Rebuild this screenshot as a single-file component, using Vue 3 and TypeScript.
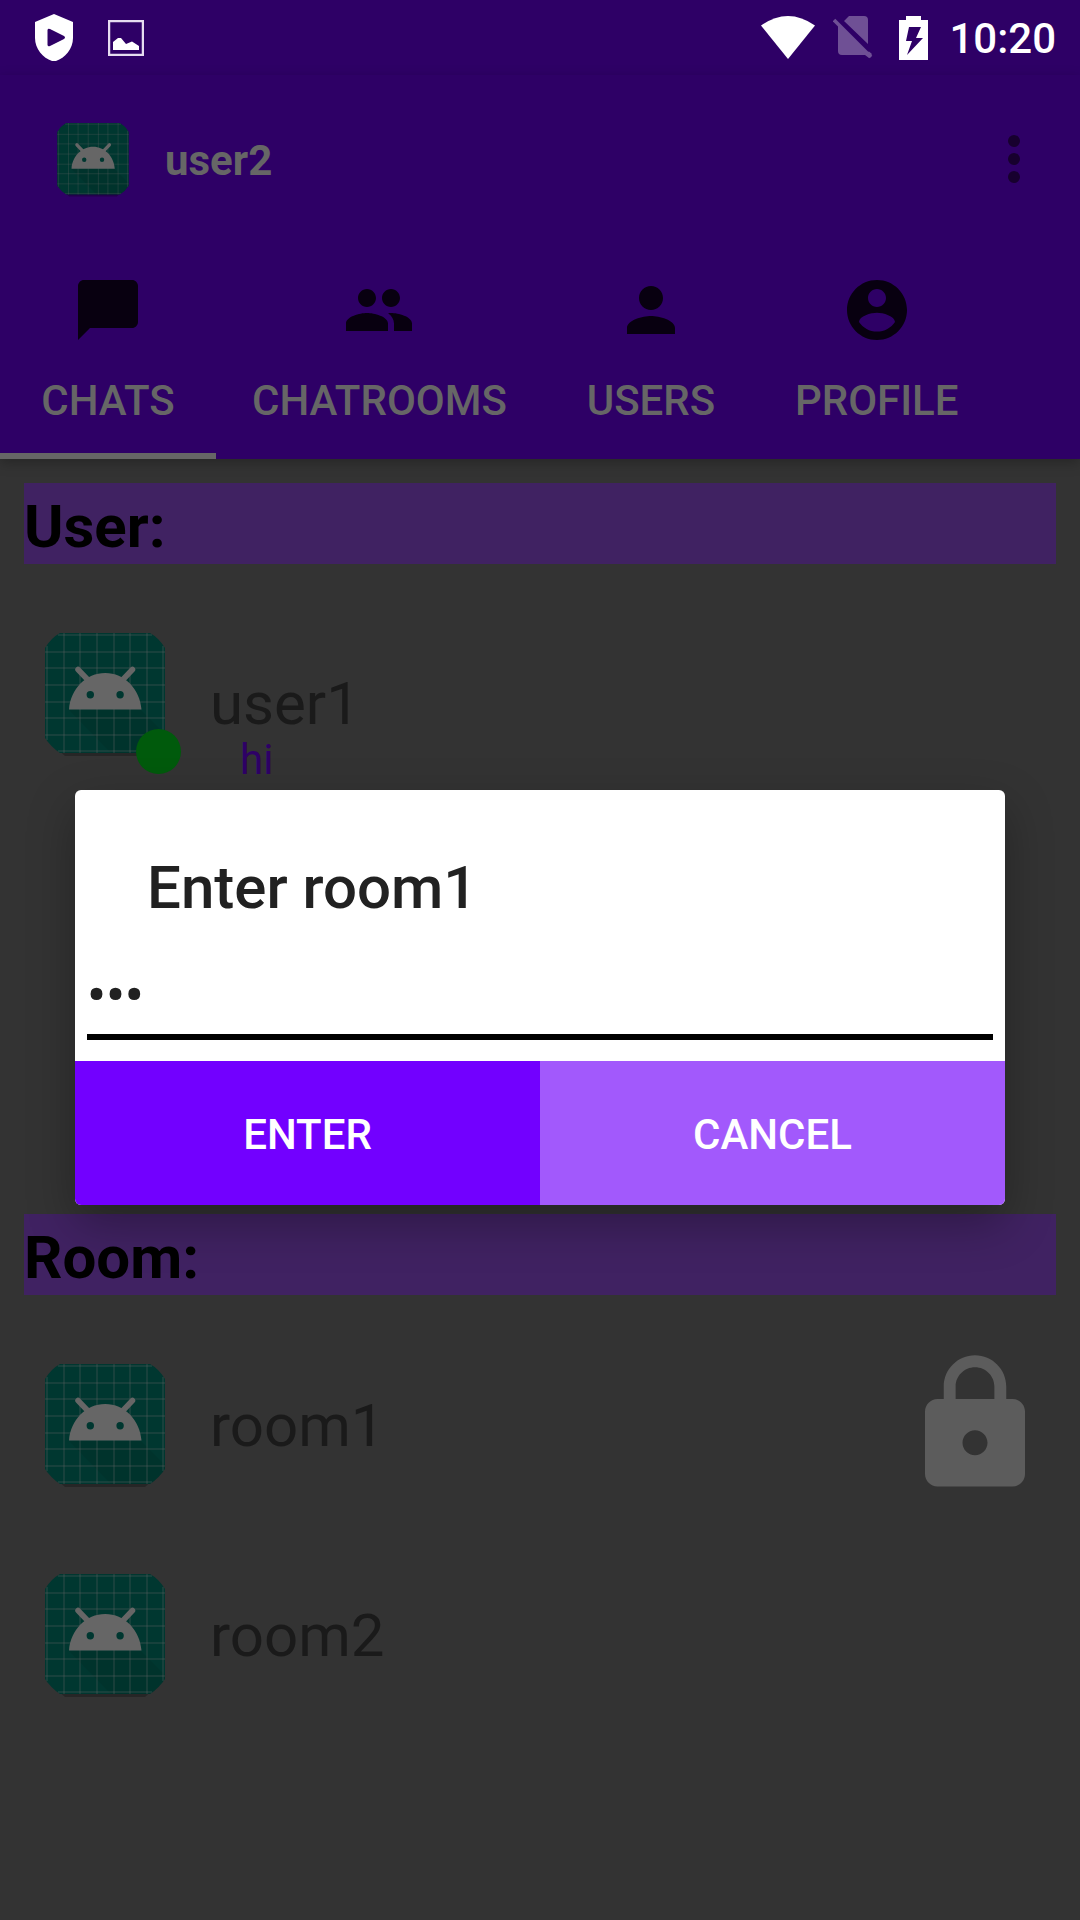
<script setup lang="ts">
import { ref } from 'vue'

interface Tab {
  label: string
  path: string
}

interface Row {
  name: string
  message?: string
  online?: boolean
  locked?: boolean
}

interface Section {
  title: string
  rows: Row[]
}

const tabs: Tab[] = [
  {
    label: 'CHATS',
    path: 'M20 2H4c-1.100 0-2 .900-2 2v18l4-4h14c1.100 0 2-.900 2-2V4c0-1.100-.900-2-2-2z',
  },
  {
    label: 'CHATROOMS',
    path: 'M16 11c1.660 0 2.990-1.340 2.990-3S17.660 5 16 5c-1.660 0-3 1.340-3 3s1.340 3 3 3zm-8 0c1.660 0 2.990-1.340 2.990-3S9.660 5 8 5C6.340 5 5 6.340 5 8s1.340 3 3 3zm0 2c-2.330 0-7 1.170-7 3.500V19h14v-2.500c0-2.330-4.670-3.500-7-3.500zm8 0c-.290 0-.620.020-.970.050 1.160.840 1.970 1.970 1.970 3.450V19h6v-2.500c0-2.330-4.670-3.500-7-3.500z',
  },
  {
    label: 'USERS',
    path: 'M12 12c2.210 0 4-1.790 4-4s-1.790-4-4-4-4 1.790-4 4 1.790 4 4 4zm0 2c-2.670 0-8 1.340-8 4v2h16v-2c0-2.660-5.330-4-8-4z',
  },
  {
    label: 'PROFILE',
    path: 'M12 2C6.480 2 2 6.480 2 12s4.480 10 10 10 10-4.480 10-10S17.520 2 12 2zm0 3c1.660 0 3 1.340 3 3s-1.340 3-3 3-3-1.340-3-3 1.340-3 3-3zm0 14.200c-2.500 0-4.710-1.280-6-3.220.030-1.990 4-3.080 6-3.080 1.990 0 5.970 1.090 6 3.080-1.290 1.940-3.500 3.220-6 3.220z',
  },
]

const sections: Section[] = [
  { title: 'User:', rows: [{ name: 'user1', message: 'hi', online: true }] },
  { title: 'Room:', rows: [{ name: 'room1', locked: true }, { name: 'room2' }] },
]

const gridLines = [2, 19, 35, 52, 69, 85, 102, 118]
const activeTab = ref('CHATS')
const password = ref('123')
</script>

<template>
  <div class="screen">
    <svg class="defs" aria-hidden="true">
      <symbol id="launcher" viewBox="0 0 120 124">
        <path d="M1 106 20 123H100L119 106V16H1Z" fill="#000" opacity=".25" />
        <path d="M15 0H105Q114 5 120 15V105Q114 114 105 120H15Q6 114 0 105V15Q6 5 15 0Z" fill="#003730" />
        <path d="M24 77H96L120 101V105Q114 114 105 120H66Z" fill="#000" opacity=".07" />
        <g stroke="#666" stroke-opacity=".3" stroke-width="1.500">
          <template v-for="p in gridLines" :key="p">
            <path :d="`M${p} ${p < 10 || p > 110 ? 13 : 0}V${p < 10 || p > 110 ? 107 : 120}`" />
            <path :d="`M${p < 10 || p > 110 ? 13 : 0} ${p}H${p < 10 || p > 110 ? 107 : 120}`" />
          </template>
        </g>
        <path d="M33 36.500 43 47M87.500 36.500 77.500 47" stroke="#666" stroke-width="5.500" stroke-linecap="round" />
        <path
          fill="#666"
          fill-rule="evenodd"
          d="M24 76.500C25.500 56 41 40 60.200 40S95 56 96.500 76.500ZM49 61.700a3.700 3.700 0 1 0-7.400 0 3.700 3.700 0 1 0 7.400 0ZM78.800 61.700a3.700 3.700 0 1 0-7.400 0 3.700 3.700 0 1 0 7.400 0Z"
        />
      </symbol>
    </svg>

    <div class="status">
      <div class="status-group status-left">
        <svg width="38" height="47" viewBox="0 0 38 47">
          <path fill="#fff" fill-rule="evenodd" d="M19 0 38 8V24C38 35 30 44 21 47H17C8 44 0 35 0 24V8ZM12.500 16V31Q13 33 15 32L29 25Q31 23.500 29 22L15 15Q13 14 12.500 16Z" />
        </svg>
        <svg width="36" height="36" viewBox="0 0 36 36">
          <rect x="1" y="1" width="34" height="34" fill="none" stroke="#e6dcf0" stroke-width="2.500" />
          <path fill="#fff" d="M5 30V22L10 18H13L18 24 24 21.500 31 26V30Z" />
        </svg>
      </div>
      <div class="status-group status-right">
        <svg width="54" height="43" viewBox="0 0 54 43">
          <path fill="#fff" d="M0 9.500Q27-9.500 54 9.500L27 43Z" />
        </svg>
        <svg width="48" height="43" viewBox="0 0 48 43">
          <path fill="#6f5095" d="M16 0H31Q35 0 35 4V28L11 5ZM5 9 33 37 36 35.500 39 38 36 42 32 39H9Q5 39 5 35Z" />
          <path stroke="#6f5095" stroke-width="3.500" d="M1 4 38 41" />
        </svg>
        <svg width="30" height="44" viewBox="0 0 30 44">
          <path fill="#fff" fill-rule="evenodd" d="M7 0H22V4H29V44H0V4H7ZM10 11 7 25H13L8 39 24 22H17L22 11Z" />
        </svg>
        <span class="clock">10:20</span>
      </div>
    </div>

    <header class="appbar">
      <div class="toolbar">
        <svg class="avatar-small"><use href="#launcher" /></svg>
        <span class="account">user2</span>
        <button class="more" type="button" aria-label="More options">
          <svg width="72" height="72" viewBox="0 0 24 24" fill="#17002e">
            <circle cx="12" cy="6" r="2" />
            <circle cx="12" cy="12" r="2" />
            <circle cx="12" cy="18" r="2" />
          </svg>
        </button>
      </div>
      <nav class="tabs">
        <button
          v-for="tab in tabs"
          :key="tab.label"
          type="button"
          class="tab"
          :class="{ active: tab.label === activeTab }"
          @click="activeTab = tab.label"
        >
          <svg width="72" height="72" viewBox="0 0 24 24" fill="#080010"><path :d="tab.path" /></svg>
          <span>{{ tab.label }}</span>
        </button>
      </nav>
    </header>

    <main class="content">
      <section v-for="section in sections" :key="section.title" class="section">
        <h2>{{ section.title }}</h2>
        <ul>
          <li v-for="row in section.rows" :key="row.name">
            <div class="avatar">
              <svg class="avatar-large"><use href="#launcher" /></svg>
              <span v-if="row.online" class="online"></span>
            </div>
            <div class="text" :class="{ 'has-message': row.message }">
              <div class="name">{{ row.name }}</div>
              <div v-if="row.message" class="message">{{ row.message }}</div>
            </div>
            <svg v-if="row.locked" class="lock" width="150" height="150" viewBox="0 0 24 24" fill="#5c5c5c">
              <path d="M18 8h-1V6c0-2.760-2.240-5-5-5S7 3.240 7 6v2H6c-1.100 0-2 .900-2 2v10c0 1.100.900 2 2 2h12c1.100 0 2-.900 2-2V10c0-1.100-.900-2-2-2zm-6 9c-1.100 0-2-.900-2-2s.900-2 2-2 2 .900 2 2-.900 2-2 2zm3.100-9H8.900V6c0-1.710 1.390-3.100 3.100-3.100 1.710 0 3.100 1.390 3.100 3.100v2z" />
            </svg>
          </li>
        </ul>
      </section>
    </main>

    <div class="overlay">
      <form class="dialog" role="dialog" aria-labelledby="dialog-title" @submit.prevent>
        <label id="dialog-title" class="dialog-title" for="room-password">Enter room1</label>
        <input id="room-password" v-model="password" class="field" type="password" autocomplete="off" />
        <div class="actions">
          <button class="enter" type="submit">ENTER</button>
          <button class="cancel" type="button">CANCEL</button>
        </div>
      </form>
    </div>
  </div>
</template>

<style>
body {
  margin: 0;
  background: #333;
}
</style>

<style scoped>
.screen {
  position: relative;
  display: flex;
  flex-direction: column;
  min-height: 100vh;
  background: #333;
  font-family: Roboto, "Liberation Sans", sans-serif;
}

svg {
  display: block;
  flex: none;
}

.defs {
  position: absolute;
  width: 0;
  height: 0;
}

button {
  padding: 0;
  border: 0;
  background: none;
  font-family: inherit;
}

.status {
  display: flex;
  justify-content: space-between;
  height: 75px;
  background: #2e0066;
}

.status-group {
  display: flex;
  align-items: center;
}

.status-left {
  gap: 35px;
  padding-left: 35px;
}

.status-right {
  gap: 18px;
  padding-right: 24px;
}

.clock {
  padding: 3px 0 0 2px;
  color: #fff;
  font-size: 42px;
  font-weight: 500;
  line-height: 50px;
}

.appbar {
  position: relative;
  background: #2e0066;
  box-shadow: 0 4px 12px rgba(0, 0, 0, 0.25);
}

.toolbar {
  display: flex;
  align-items: center;
  height: 168px;
  padding: 0 30px 0 57px;
}

.avatar-small {
  width: 72px;
  height: 74px;
  margin-bottom: -2px;
}

.account {
  flex: 1;
  padding: 3px 0 0 36px;
  color: #666;
  font-size: 42px;
  font-weight: 700;
  line-height: 50px;
}

.tabs {
  display: flex;
}

.tab {
  display: flex;
  flex-direction: column;
  align-items: center;
  gap: 30px;
  min-width: 216px;
  height: 216px;
  padding: 31px 36px 0;
  color: #666;
  font-size: 42px;
  font-weight: 500;
  line-height: 50px;
}

.tab.active {
  box-shadow: inset 0 -6px #666;
}

.content {
  flex: 1;
  display: grid;
  grid-template-rows: 1fr 1fr;
}

.section {
  padding: 24px 24px 0;
}

h2 {
  margin: 0;
  padding-top: 6px;
  background: #402262;
  color: #000;
  font-size: 60px;
  font-weight: 700;
  line-height: 75px;
}

ul {
  margin: 0;
  padding: 24px 0 0;
  list-style: none;
}

li {
  display: flex;
  align-items: center;
  height: 210px;
  padding: 0 6px 0 21px;
}

.avatar {
  position: relative;
}

.avatar-large {
  width: 120px;
  height: 124px;
  margin-bottom: -4px;
}

.online {
  position: absolute;
  right: -16px;
  bottom: -21px;
  width: 45px;
  height: 45px;
  border-radius: 50%;
  background: #005a0c;
}

.text {
  flex: 1;
  padding: 4px 0 0 45px;
}

.text.has-message {
  align-self: flex-start;
  padding-top: 81px;
}

.name {
  color: #1a1a1a;
  font-size: 60px;
  line-height: 70px;
}

.message {
  padding-left: 30px;
  color: #2e0066;
  font-size: 42px;
  line-height: 42px;
}

.overlay {
  position: absolute;
  inset: 75px 0 0;
  display: flex;
  align-items: center;
  justify-content: center;
  padding: 0 75px;
}

.dialog {
  display: flex;
  flex: 1;
  flex-direction: column;
  overflow: hidden;
  border-radius: 6px;
  background: #fff;
  box-shadow: 0 18px 48px rgba(0, 0, 0, 0.3);
}

.dialog-title {
  padding: 60px 72px 0;
  color: #212121;
  font-size: 60px;
  font-weight: 500;
  line-height: 75px;
}

.field {
  box-sizing: border-box;
  height: 93px;
  margin: 22px 12px 21px;
  padding: 9px 0 0;
  border: 0;
  border-bottom: 6px solid #000;
  outline: 0;
  background: none;
  color: #212121;
  font-family: inherit;
  font-size: 54px;
  font-weight: 500;
}

.actions {
  display: grid;
  grid-template-columns: 1fr 1fr;
}

.actions button {
  height: 144px;
  padding-top: 3px;
  color: #fff;
  font-size: 42px;
  font-weight: 500;
}

.enter {
  background: #7200ff;
}

.cancel {
  background: #a259fc;
}
</style>
